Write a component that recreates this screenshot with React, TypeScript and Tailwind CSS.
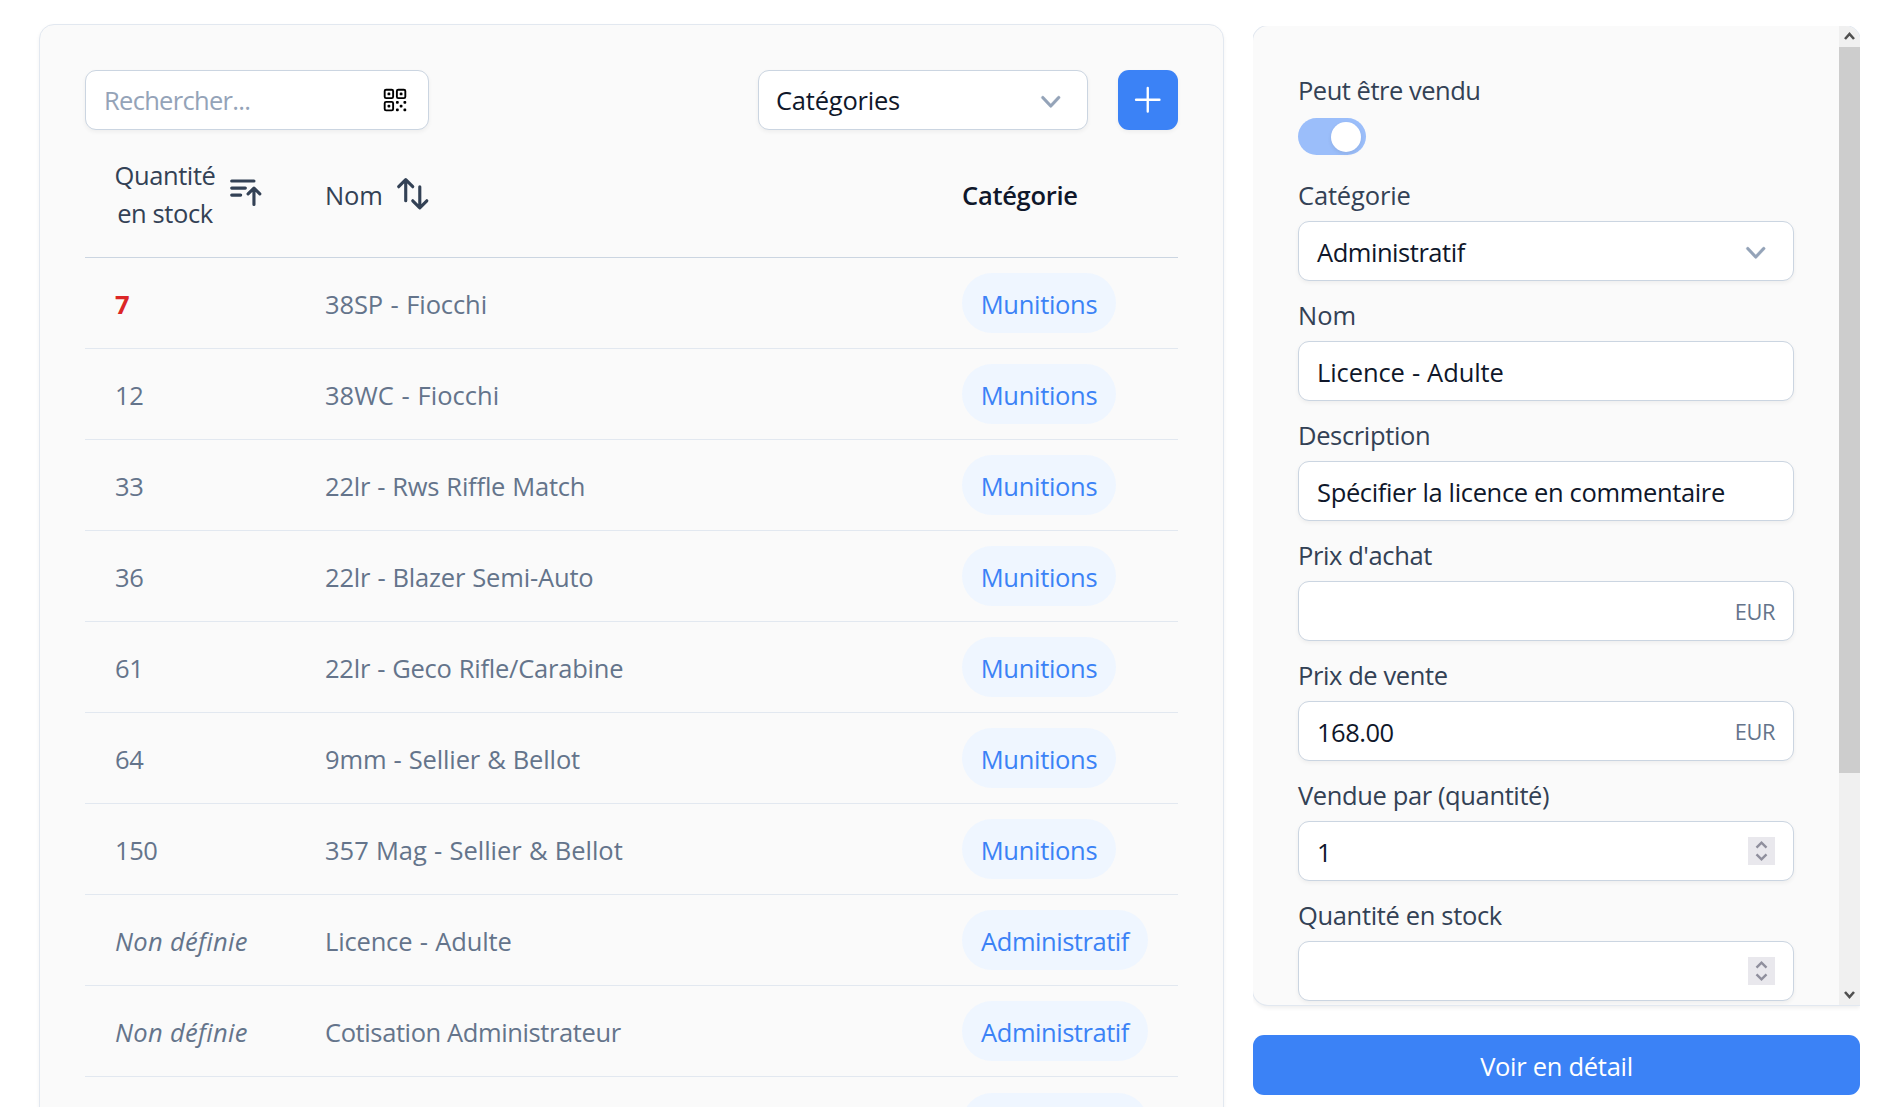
import type { ReactNode } from "react";

type Row = { qty: string; qtyClass: string; name: string; nameClass: string; category: "Munitions" | "Administratif" };

const rows: Row[] = [
  { qty: "7", qtyClass: "font-bold text-[#dc2626]", name: "38SP - Fiocchi", nameClass: "tracking-[-0.1px] [word-spacing:1px]", category: "Munitions" },
  { qty: "12", qtyClass: "tracking-[-0.4px]", name: "38WC - Fiocchi", nameClass: "tracking-[0.04px] [word-spacing:1px]", category: "Munitions" },
  { qty: "33", qtyClass: "tracking-[-0.3px]", name: "22lr - Rws Riffle Match", nameClass: "tracking-[-0.2px] [word-spacing:0.6px]", category: "Munitions" },
  { qty: "36", qtyClass: "tracking-[-0.3px]", name: "22lr - Blazer Semi-Auto", nameClass: "tracking-[-0.17px] [word-spacing:0.6px]", category: "Munitions" },
  { qty: "61", qtyClass: "tracking-[-0.3px]", name: "22lr - Geco Rifle/Carabine", nameClass: "tracking-[-0.22px] [word-spacing:0.6px]", category: "Munitions" },
  { qty: "64", qtyClass: "tracking-[-0.3px]", name: "9mm - Sellier & Bellot", nameClass: "tracking-[-0.13px] [word-spacing:0.6px]", category: "Munitions" },
  { qty: "150", qtyClass: "tracking-[-0.4px]", name: "357 Mag - Sellier & Bellot", nameClass: "tracking-[-0.01px] [word-spacing:0.6px]", category: "Munitions" },
  { qty: "Non définie", qtyClass: "italic tracking-[0.32px]", name: "Licence - Adulte", nameClass: "tracking-[-0.16px] [word-spacing:1px]", category: "Administratif" },
  { qty: "Non définie", qtyClass: "italic tracking-[0.32px]", name: "Cotisation Administrateur", nameClass: "tracking-[-0.39px]", category: "Administratif" },
];

const outline = { fill: "none", stroke: "currentColor", strokeLinecap: "round", strokeLinejoin: "round" } as const;

function Icon({ d, className, weight = 1.5 }: { d: string[]; className: string; weight?: number }) {
  return (
    <svg viewBox="0 0 24 24" className={`shrink-0 ${className}`} strokeWidth={weight} {...outline}>
      {d.map((p) => (
        <path key={p} d={p} />
      ))}
    </svg>
  );
}

const icons = {
  qr: [
    "M3.75 4.875c0-.621.504-1.125 1.125-1.125h4.5c.621 0 1.125.504 1.125 1.125v4.5c0 .621-.504 1.125-1.125 1.125h-4.5A1.125 1.125 0 0 1 3.75 9.375v-4.5ZM3.75 14.625c0-.621.504-1.125 1.125-1.125h4.5c.621 0 1.125.504 1.125 1.125v4.5c0 .621-.504 1.125-1.125 1.125h-4.5a1.125 1.125 0 0 1-1.125-1.125v-4.5ZM13.5 4.875c0-.621.504-1.125 1.125-1.125h4.5c.621 0 1.125.504 1.125 1.125v4.5c0 .621-.504 1.125-1.125 1.125h-4.5A1.125 1.125 0 0 1 13.5 9.375v-4.5Z",
    "M6.75 6.75h.75v.75h-.75v-.75ZM6.75 16.5h.75v.75h-.75v-.75ZM16.5 6.75h.75v.75h-.75v-.75ZM13.5 13.5h.75v.75h-.75v-.75ZM13.5 19.5h.75v.75h-.75v-.75ZM19.5 13.5h.75v.75h-.75v-.75ZM19.5 19.5h.75v.75h-.75v-.75ZM16.5 16.5h.75v.75h-.75v-.75Z",
  ],
  sortAsc: ["M3 4.5h14.25M3 9h8.75M3 13.5h5.75m4.75-.75L17.25 9m0 0L21 12.75M17.25 9v10.5"],
  sortBoth: ["M3 7.5 7.5 3m0 0L12 7.5M7.5 3v13.5m13.5 0L16.5 21m0 0L12 16.5m4.5 4.5V7.5"],
  plus: ["M12 4.5v15m7.5-7.5h-15"],
};

function ChevronDown() {
  return (
    <svg viewBox="0 0 20 20" fill="currentColor" stroke="currentColor" strokeWidth="0.2" className="mt-[3px] mr-px size-[37.5px] shrink-0 text-[#94a3b8]">
      <path d="M5.23 7.21a.75.75 0 011.06.02L10 11.168l3.71-3.938a.75.75 0 111.08 1.04l-4.25 4.5a.75.75 0 01-1.08 0l-4.25-4.5a.75.75 0 01.02-1.06z" />
    </svg>
  );
}

function Pill({ category }: { category: Row["category"] }) {
  return (
    <span
      className={
        category === "Munitions"
          ? "flex h-15 w-[154px] items-center justify-center rounded-[30px] bg-[#eff6ff] pt-[2px] tracking-[-0.3px] text-[#3b82f6]"
          : "flex h-15 w-[186px] items-center justify-center rounded-[30px] bg-[#eff6ff] pt-[2px] tracking-[-0.46px] text-[#3b82f6]"
      }
    >
      {category}
    </span>
  );
}

function Field({ label, labelClass, children }: { label: string; labelClass: string; children?: ReactNode }) {
  return (
    <div>
      <div className={`flex items-center text-[#334155] ${labelClass}`}>{label}</div>
      <div className="flex h-15 items-center justify-between rounded-[11px] border border-[#cbd5e1] bg-white px-[18px] text-[#0f172a] shadow-[0_2px_4px_rgba(0,0,0,0.05)]">
        {children}
      </div>
    </div>
  );
}

function Euro() {
  return <span className="pt-[2px] text-[21.8px] tracking-[-0.4px] text-[#64748b]">EUR</span>;
}

function Spinner() {
  return (
    <svg viewBox="0 0 27 28" className="h-7 w-[27px] shrink-0 bg-[#e9e8ed]" fill="none" stroke="#8f8f9d" strokeWidth="2.4">
      <path d="M8.5 10.7 13.5 5.7l5 5M8.5 17.3l5 5 5-5" />
    </svg>
  );
}

function Arrow({ d }: { d: string }) {
  return (
    <svg viewBox="0 0 21 21" className="size-[21px]" fill="none" stroke="#505050" strokeWidth="2.6">
      <path d={d} />
    </svg>
  );
}

export default function App() {
  return (
    <div className="flex h-[1107px] w-[1881px] items-start overflow-hidden bg-white pl-[39px] font-['Open_Sans',sans-serif] text-[25.5px] leading-[38px] whitespace-nowrap">
      <main className="mt-6 h-[1200px] w-[1185px] shrink-0 rounded-[15px] border border-[#e2e8f0] bg-[#fafafa] px-[45px] pt-[45px] shadow-[0_2px_4px_rgba(0,0,0,0.05)]">
        <div className="flex h-15">
          <div className="flex w-[344px] items-center justify-between rounded-[11px] border border-[#cbd5e1] bg-white px-[18px] shadow-[0_2px_4px_rgba(0,0,0,0.05)]">
            <span className="tracking-[-0.7px] text-[#94a3b8]">Rechercher...</span>
            <Icon d={icons.qr} className="size-[30px] text-black" />
          </div>
          <div className="ml-auto flex w-[330px] items-center justify-between rounded-[11px] border border-[#cbd5e1] bg-white px-[17px] text-[#0f172a] shadow-[0_2px_4px_rgba(0,0,0,0.05)]">
            <span className="tracking-[-0.22px]">Catégories</span>
            <ChevronDown />
          </div>
          <button className="ml-[30px] flex w-15 items-center justify-center rounded-[11px] bg-[#3b82f6] text-white shadow-[0_2px_4px_rgba(0,0,0,0.05)]">
            <Icon d={icons.plus} className="size-[37.5px]" />
          </button>
        </div>

        <div className="grid h-32 grid-cols-[240px_637px_1fr] items-center border-b border-[#cbd5e1] text-[#334155]">
          <div className="flex items-center gap-[11px] pl-[29px]">
            <div className="flex w-[102px] flex-col items-center pt-px">
              <span className="tracking-[-0.4px]">Quantité</span>
              <span className="tracking-[-0.4px]">en stock</span>
            </div>
            <Icon d={icons.sortAsc} weight={2} className="mb-[2px] size-[37.5px]" />
          </div>
          <div className="flex items-center gap-[10px]">
            <span className="w-[58.5px] pt-[2px] tracking-[-0.2px]">Nom</span>
            <Icon d={icons.sortBoth} weight={2} className="size-[37.5px]" />
          </div>
          <div className="pt-[2px] font-semibold tracking-[-0.28px] text-[#0f172a]">Catégorie</div>
        </div>

        {rows.map((row, i) => (
          <div key={i} className="grid h-[91px] grid-cols-[240px_637px_1fr] items-center border-b border-[#e2e8f0] text-[#64748b]">
            <div className={`pt-[2px] pl-[30px] ${row.qtyClass}`}>{row.qty}</div>
            <div className={`pt-[2px] ${row.nameClass}`}>{row.name}</div>
            <Pill category={row.category} />
          </div>
        ))}
        <div className="flex h-[91px] items-center pl-[877px]">
          <span className="h-15 w-[186px] rounded-[30px] bg-[#eff6ff]" />
        </div>
      </main>

      <aside className="ml-[29px] w-[607px] shrink-0">
        <div className="mt-[26px] h-[985px] overflow-hidden">
          <div className="flex h-[979px] overflow-hidden rounded-[15px] rounded-br-none bg-[#fafafa] shadow-[0_0_0_1px_#e2e8f0,0_3px_4px_rgba(0,0,0,0.07)]">
            <div className="flex-1 px-[45px] pt-8">
              <div className="flex h-15 items-center pt-[3px] tracking-[-0.48px] text-[#334155]">Peut être vendu</div>
              <div className="flex h-[37px] w-[68px] items-center justify-end rounded-full bg-[#9bbefa] pr-[5px]">
                <span className="size-[30px] rounded-full bg-white shadow-[0_2px_4px_rgba(0,0,0,0.08)]" />
              </div>
              <Field label="Catégorie" labelClass="h-[66px] pt-[14px] tracking-[-0.15px]">
                <span className="pt-[2px] tracking-[-0.46px]">Administratif</span>
                <ChevronDown />
              </Field>
              <Field label="Nom" labelClass="h-15 pt-2">
                <span className="pt-[2px] tracking-[-0.1px] [word-spacing:0.6px]">Licence - Adulte</span>
              </Field>
              <Field label="Description" labelClass="h-15 pt-2 tracking-[-0.35px]">
                <span className="pt-[2px] tracking-[-0.35px]">Spécifier la licence en commentaire</span>
              </Field>
              <Field label="Prix d'achat" labelClass="h-15 pt-2 tracking-[-0.4px]">
                <span />
                <Euro />
              </Field>
              <Field label="Prix de vente" labelClass="h-15 pt-2 tracking-[-0.4px]">
                <span className="pt-[2px] tracking-[-0.5px]">168.00</span>
                <Euro />
              </Field>
              <Field label="Vendue par (quantité)" labelClass="h-15 pt-2 tracking-[-0.38px]">
                <span className="pt-[2px]">1</span>
                <Spinner />
              </Field>
              <Field label="Quantité en stock" labelClass="h-15 pt-2 tracking-[-0.34px]">
                <span />
                <Spinner />
              </Field>
            </div>
            <div className="flex w-[21px] flex-col bg-[#f0f0f0]">
              <Arrow d="M6 13l4.5-5 4.5 5" />
              <div className="h-[726px] bg-[#cdcdcd]" />
              <div className="mt-auto">
                <Arrow d="M6 8l4.5 5 4.5-5" />
              </div>
            </div>
          </div>
        </div>
        <button className="mt-6 flex h-15 w-full items-center justify-center rounded-[11px] bg-[#3b82f6] pt-[2px] tracking-[-0.28px] text-white">
          Voir en détail
        </button>
      </aside>
    </div>
  );
}
